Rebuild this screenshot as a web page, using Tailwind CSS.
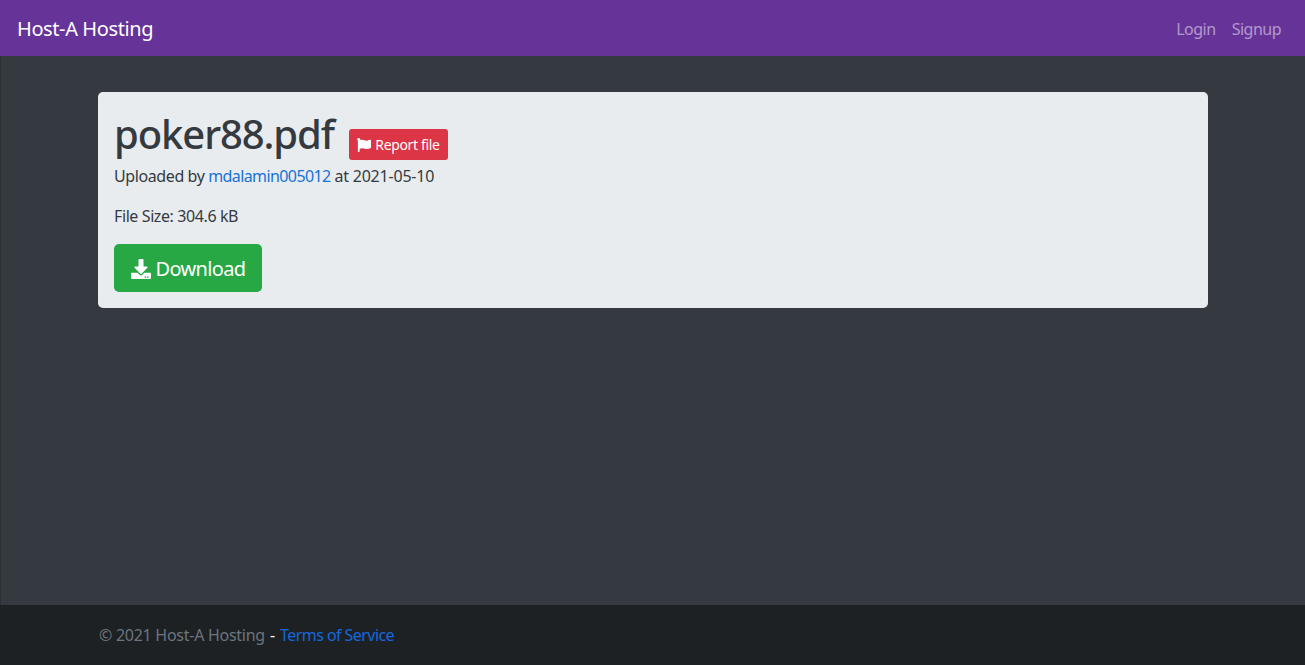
<!DOCTYPE html>
<html lang="en">
<head>
    <meta charset="UTF-8">
    <meta name="viewport" content="width=device-width, initial-scale=1.0">
    <title>poker88.pdf - Host-A Hosting</title>
    <script src="https://cdn.jsdelivr.net/npm/@tailwindcss/browser@4"></script>
</head>
<body class="h-[665px] overflow-hidden flex flex-col bg-[#343a40] font-['Noto_Sans','Open_Sans',sans-serif] text-[#343a40]">
    <!-- Navbar -->
    <nav class="h-14 shrink-0 bg-[#663399] flex items-center justify-between pl-[17px] pr-6 pt-px">
        <a href="#" class="text-[20px] tracking-[-0.4px] text-white">Host-A Hosting</a>
        <div class="flex gap-4 text-[16px] tracking-[-0.5px] text-white/50">
            <a href="#">Login</a>
            <a href="#">Signup</a>
        </div>
    </nav>

    <!-- Main -->
    <main class="flex-1 pt-9 border-l border-[#2b3035]">
        <div class="ml-[97px] w-[1110px] h-[216px] bg-[#e9ecef] rounded-[5px] pl-4 pt-[13px]">
            <div class="flex items-start h-[58px]">
                <h1 class="text-[40px] leading-[58px] tracking-[-1.1px] font-medium">poker88.pdf</h1>
                <a href="#" class="ml-[15px] mt-6 h-[31px] w-[99px] bg-[#dc3545] rounded-[3px] text-white text-[14px] tracking-[-0.35px] flex items-center justify-center gap-[4px]">
                    <svg class="w-[14px] h-[14px]" viewBox="0 0 512 512" fill="currentColor"><path d="M349.565 98.783C295.978 98.783 251.721 64 184.348 64c-24.955 0-47.309 4.384-68.045 12.013a55.947 55.947 0 0 0 3.586-23.562C118.117 24.015 94.806 1.206 66.338.048 34.345-1.254 8 24.296 8 56c0 19.026 9.497 35.825 24 45.945V488c0 13.255 10.745 24 24 24h16c13.255 0 24-10.745 24-24v-94.4c28.311-12.064 63.582-22.122 114.435-22.122 53.588 0 97.844 34.783 165.217 34.783 48.169 0 86.667-16.294 122.505-40.858C506.84 359.452 512 349.571 512 339.045v-243.1c0-23.393-24.269-38.87-45.485-29.016-34.338 15.948-76.454 31.854-116.95 31.854z"/></svg>
                    Report file
                </a>
            </div>
            <p class="text-[16px] leading-6 tracking-[-0.4px] mt-px">Uploaded by <a href="#" class="text-[#1673d6] tracking-[-0.6px]">mdalamin005012</a> <span class="tracking-[-0.2px]">at 2021-05-10</span></p>
            <p class="text-[16px] leading-6 tracking-[-0.4px] mt-4">File Size: 304.6 kB</p>
            <a href="#" class="mt-4 w-[148px] h-12 pt-px bg-[#28a745] rounded-[5px] text-white text-[20px] tracking-[-0.65px] flex items-center justify-center gap-[5px]">
                <svg class="w-5 h-5" viewBox="0 0 512 512" fill="currentColor"><path d="M216 0h80c13.3 0 24 10.7 24 24v168h87.7c17.8 0 26.7 21.5 14.1 34.1L269.7 378.3c-7.5 7.5-19.8 7.5-27.3 0L90.1 226.1c-12.6-12.6-3.7-34.1 14.1-34.1H192V24c0-13.3 10.7-24 24-24zm296 376v112c0 13.3-10.7 24-24 24H24c-13.3 0-24-10.7-24-24V376c0-13.3 10.7-24 24-24h146.7l49 49c20.1 20.1 52.5 20.1 72.6 0l49-49H488c13.3 0 24 10.7 24 24zm-124 88c0-11-9-20-20-20s-20 9-20 20 9 20 20 20 20-9 20-20zm64 0c0-11-9-20-20-20s-20 9-20 20 9 20 20 20 20-9 20-20z"/></svg>
                Download
            </a>
        </div>
    </main>

    <!-- Footer -->
    <footer class="h-[60px] shrink-0 bg-[#1d2124] flex items-center pl-[99px] text-[16px]">
        <span class="text-[#6c757d] tracking-[-0.27px]">© 2021 Host-A Hosting</span>
        <span class="text-white ml-[5px]">-</span>
        <a href="#" class="text-[#1668dc] tracking-[-0.56px] ml-[5px]">Terms of Service</a>
    </footer>
</body>
</html>
